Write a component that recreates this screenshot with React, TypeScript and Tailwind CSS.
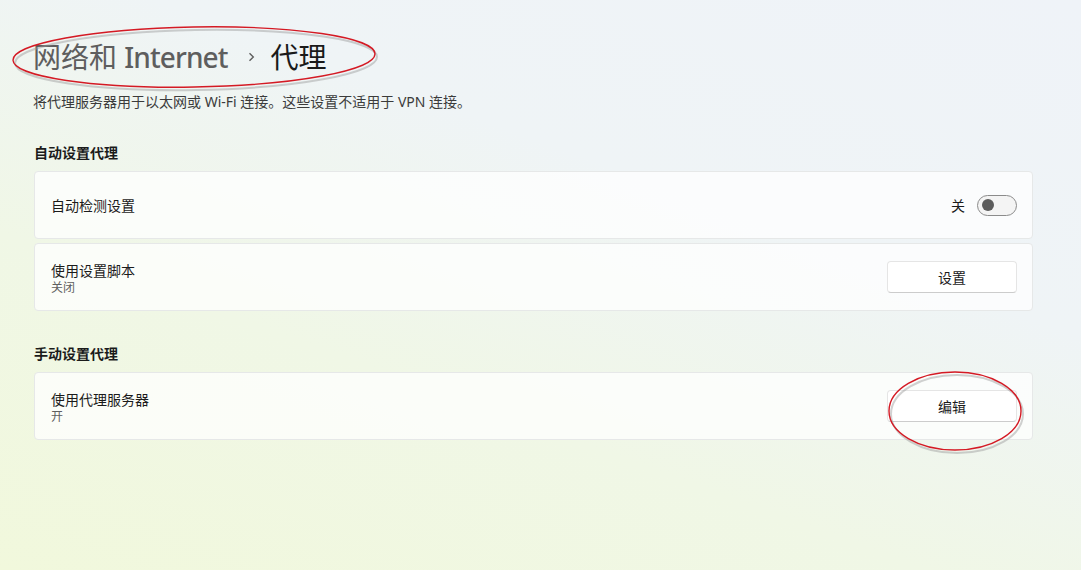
import type { ReactNode } from "react";

const font = {
  fontFamily: '"Segoe UI", "Noto Sans", "Noto Sans CJK SC", sans-serif',
};

export default function App() {
  return (
    <main
      style={font}
      className="relative h-[570px] w-full overflow-hidden bg-[linear-gradient(200deg,#eff3f8_0%,#eff4f6_35%,#f0f7e6_65%,#f1f8dc_100%)] pl-[34px] pr-[48px] pt-[37px] text-[#1b1b1b]"
    >
      {/* Breadcrumb title */}
      <h1 className="flex h-[40px] items-center text-[28px] leading-[40px]">
        <span className="-ml-px text-[#5e5e5e]">
          网络和 <span className="font-medium tracking-[-0.9px]">Internet</span>
        </span>
        <svg
          className="ml-[20px] mr-[16px] h-[10px] w-[7px]"
          viewBox="0 0 7 10"
          fill="none"
        >
          <path d="M1.5 1.2 5.3 5 1.5 8.8" stroke="#5e5e5e" strokeWidth="1.4" />
        </svg>
        <span className="text-[#1a1a1a]">代理</span>
      </h1>

      <p className="-ml-px mt-[15px] text-[14px] leading-[20px] text-[#3b3b3b]">
        将代理服务器用于以太网或 Wi-Fi 连接。这些设置不适用于 VPN 连接。
      </p>

      {/* Automatic */}
      <h2 className="mt-[31px] text-[14px] font-semibold leading-[20px]">自动设置代理</h2>
      <div className="mt-[8px] flex flex-col gap-[4px]">
        <Card>
          <span className="text-[14px]">自动检测设置</span>
          <div className="flex items-center gap-[12px]">
            <span className="text-[14px]">关</span>
            <div className="flex h-[21px] w-[40px] items-center rounded-full border border-[#8b8b8b] bg-[#f4f4f4] pl-[4px]">
              <div className="h-[12px] w-[12px] rounded-full bg-[#5c5c5c]" />
            </div>
          </div>
        </Card>
        <Card>
          <Label title="使用设置脚本" sub="关闭" />
          <Button>设置</Button>
        </Card>
      </div>

      {/* Manual */}
      <h2 className="mt-[33px] text-[14px] font-semibold leading-[20px]">手动设置代理</h2>
      <div className="mt-[8px]">
        <Card>
          <Label title="使用代理服务器" sub="开" />
          <Button>编辑</Button>
        </Card>
      </div>

      {/* Annotation ellipses */}
      <svg
        className="pointer-events-none absolute left-0 top-0"
        width="1081"
        height="570"
        viewBox="0 0 1081 570"
        fill="none"
      >
        <g stroke="#9a9a9a" strokeOpacity="0.45" strokeWidth="2">
          <ellipse cx="196" cy="60" rx="181" ry="30" transform="rotate(-1 196 60)" />
          <ellipse cx="957" cy="414" rx="66" ry="39" />
        </g>
        <g stroke="#d41a24" strokeWidth="1.4">
          <ellipse cx="194" cy="57" rx="181" ry="30" transform="rotate(-1 194 57)" />
          <ellipse cx="955" cy="411" rx="66" ry="39" />
        </g>
      </svg>
    </main>
  );
}

function Card({ children }: { children: ReactNode }) {
  return (
    <div className="flex h-[68px] items-center justify-between rounded-[4px] border border-[#e6e8e8] bg-white/75 pl-[16px] pr-[15px]">
      {children}
    </div>
  );
}

function Label({ title, sub }: { title: string; sub: string }) {
  return (
    <div className="flex flex-col pt-[2px]">
      <span className="text-[14px] leading-[19px]">{title}</span>
      <span className="text-[12px] leading-[16px] text-[#5f5f5f]">{sub}</span>
    </div>
  );
}

function Button({ children }: { children: ReactNode }) {
  return (
    <button className="h-[32px] w-[130px] rounded-[4px] border border-[#e5e5e5] border-b-[#cccccc] bg-white text-[14px] text-[#1b1b1b]">
      {children}
    </button>
  );
}
